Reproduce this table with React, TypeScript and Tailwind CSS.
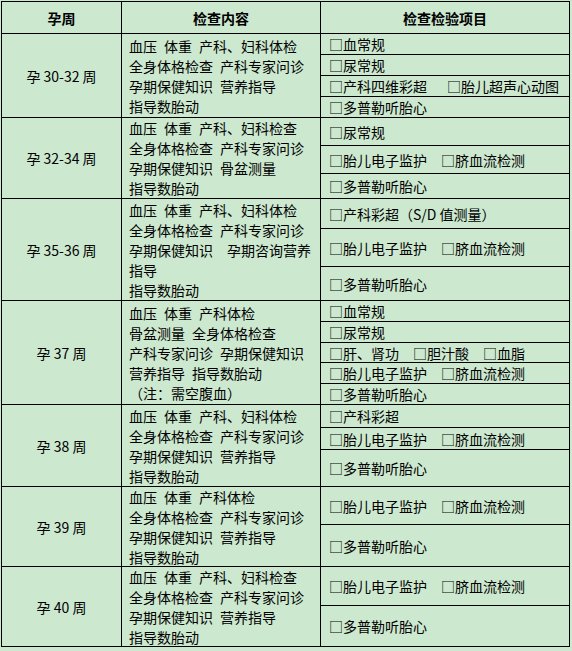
import React from 'react';

type SubRow = { h: string; items: string[]; gap?: string };
type Group = { week: string; h: string; last?: boolean; content: string[]; rows: SubRow[] };

const groups: Group[] = [
  {
    week: '孕 30-32 周',
    h: 'h-[84px]',
    content: ['血压 体重 产科、妇科体检', '全身体格检查 产科专家问诊', '孕期保健知识 营养指导', '指导数胎动'],
    rows: [
      { h: 'h-[21px]', items: ['血常规'] },
      { h: 'h-[21px]', items: ['尿常规'] },
      { h: 'h-[21px]', items: ['产科四维彩超', '胎儿超声心动图'], gap: 'ml-[20px]' },
      { h: 'flex-1', items: ['多普勒听胎心'] },
    ],
  },
  {
    week: '孕 32-34 周',
    h: 'h-[81px]',
    content: ['血压 体重 产科、妇科检查', '全身体格检查 产科专家问诊', '孕期保健知识 骨盆测量', '指导数胎动'],
    rows: [
      { h: 'h-[28px]', items: ['尿常规'] },
      { h: 'h-[28px]', items: ['胎儿电子监护', '脐血流检测'] },
      { h: 'flex-1', items: ['多普勒听胎心'] },
    ],
  },
  {
    week: '孕 35-36 周',
    h: 'h-[102px]',
    content: ['血压 体重 产科、妇科体检', '全身体格检查 产科专家问诊', '孕期保健知识　孕期咨询营养', '指导', '指导数胎动'],
    rows: [
      { h: 'h-[30px]', items: ['产科彩超（S/D 值测量）'] },
      { h: 'h-[38px]', items: ['胎儿电子监护', '脐血流检测'] },
      { h: 'flex-1', items: ['多普勒听胎心'] },
    ],
  },
  {
    week: '孕 37 周',
    h: 'h-[104px]',
    content: ['血压 体重 产科体检', '骨盆测量 全身体格检查', '产科专家问诊 孕期保健知识', '营养指导 指导数胎动', '（注：需空腹血）'],
    rows: [
      { h: 'h-[21px]', items: ['血常规'] },
      { h: 'h-[21px]', items: ['尿常规'] },
      { h: 'h-[20px]', items: ['肝、肾功', '胆汁酸', '血脂'] },
      { h: 'h-[21px]', items: ['胎儿电子监护', '脐血流检测'] },
      { h: 'flex-1', items: ['多普勒听胎心'] },
    ],
  },
  {
    week: '孕 38 周',
    h: 'h-[82px]',
    content: ['血压 体重 产科、妇科体检', '全身体格检查 产科专家问诊', '孕期保健知识 营养指导', '指导数胎动'],
    rows: [
      { h: 'h-[23px]', items: ['产科彩超'] },
      { h: 'h-[22px]', items: ['胎儿电子监护', '脐血流检测'] },
      { h: 'flex-1', items: ['多普勒听胎心'] },
    ],
  },
  {
    week: '孕 39 周',
    h: 'h-[80px]',
    content: ['血压 体重 产科体检', '全身体格检查 产科专家问诊', '孕期保健知识 营养指导', '指导数胎动'],
    rows: [
      { h: 'h-[38px]', items: ['胎儿电子监护', '脐血流检测'] },
      { h: 'flex-1', items: ['多普勒听胎心'] },
    ],
  },
  {
    week: '孕 40 周',
    h: 'h-[79px]',
    last: true,
    content: ['血压 体重 产科、妇科检查', '全身体格检查 产科专家问诊', '孕期保健知识 营养指导', '指导数胎动'],
    rows: [
      { h: 'h-[39px]', items: ['胎儿电子监护', '脐血流检测'] },
      { h: 'flex-1', items: ['多普勒听胎心'] },
    ],
  },
];

// the source uses wide spaces between phrases
const Line = ({ text }: { text: string }) => (
  <div className="whitespace-pre">
    {text.split(' ').map((part, i) => (
      <React.Fragment key={i}>
        {i > 0 && <span className="inline-block w-[7px]" />}
        {part}
      </React.Fragment>
    ))}
  </div>
);

const App = () => {
  return (
    <div className="min-h-screen w-full bg-[#cce8cf] pt-px pl-px font-['Noto_Sans_CJK_SC',sans-serif] text-[14px] leading-[20px] text-black">
      <div className="w-[569px] border border-black">
        {/* header */}
        <div className="flex h-[32px] border-b border-black font-bold">
          <div className="flex w-[120px] items-center justify-center border-r border-black">孕周</div>
          <div className="flex w-[199px] items-center justify-center border-r border-black">检查内容</div>
          <div className="flex flex-1 items-center justify-center">检查检验项目</div>
        </div>

        {groups.map(g => (
          <div key={g.week} className={`flex ${g.h} ${g.last ? '' : 'border-b border-black'}`}>
            <div className="flex w-[120px] items-center justify-center border-r border-black whitespace-pre">
              {g.week}
            </div>
            <div className="flex w-[199px] flex-col justify-center border-r border-black pl-[7px]">
              {g.content.map((line, i) => (
                <Line key={i} text={line} />
              ))}
            </div>
            <div className="flex flex-1 flex-col">
              {g.rows.map((r, i) => (
                <div
                  key={i}
                  className={`flex items-center pl-[8px] ${r.h} ${i < g.rows.length - 1 ? 'border-b border-black' : ''}`}
                >
                  {r.items.map((it, j) => (
                    <span key={j} className={j > 0 ? r.gap ?? 'ml-[14px]' : ''}>
                      □{it}
                    </span>
                  ))}
                </div>
              ))}
            </div>
          </div>
        ))}
      </div>
    </div>
  );
};

export default App;
